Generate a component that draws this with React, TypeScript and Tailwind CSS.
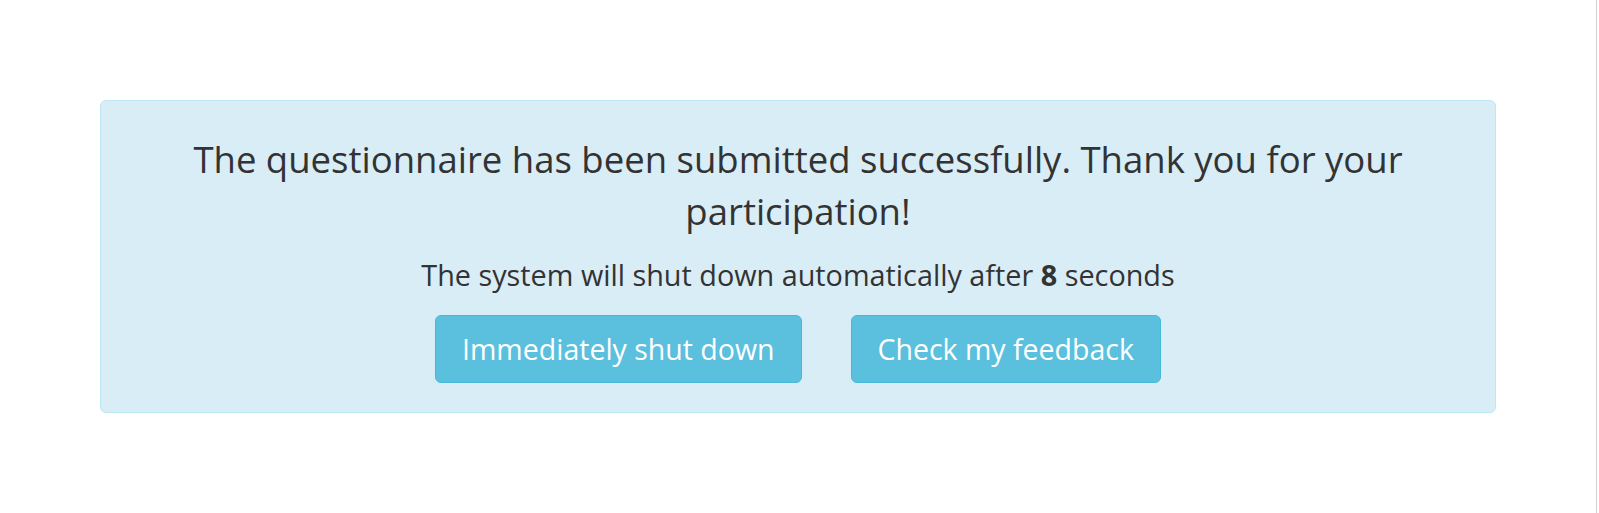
const SubmittedNotice = () => {
  return (
    <div className="rounded-[6px] border border-[#bce8f1] bg-[#d9edf7] pt-[32px] pb-[29px] px-6 text-center text-[#333]">
      <h3 className="text-[36.5px] leading-[52px] font-normal">
        The questionnaire has been submitted successfully. Thank you for your
        <br />
        participation!
      </h3>
      <p className="mt-[18px] text-[28.8px] leading-[40px]">
        The system will shut down automatically after <b>8</b> seconds
      </p>
      <div className="mt-[20px] flex justify-center gap-[49px]">
        <button className="h-[68px] rounded-[6px] border border-[#46b8da] bg-[#5bc0de] px-[26px] text-[28.5px] text-white">
          Immediately shut down
        </button>
        <button className="h-[68px] rounded-[6px] border border-[#46b8da] bg-[#5bc0de] px-[26px] text-[28.5px] text-white">
          Check my feedback
        </button>
      </div>
    </div>
  );
};

export default function App() {
  return (
    <div className="flex h-[513px] w-[1599px] bg-white font-['Open_Sans',sans-serif]">
      <main className="w-[1596px] px-[100px] pt-[100px]">
        <SubmittedNotice />
      </main>
      <div className="w-px h-full bg-[#d0d0d0]" />
      <div className="flex-1" />
    </div>
  );
}
